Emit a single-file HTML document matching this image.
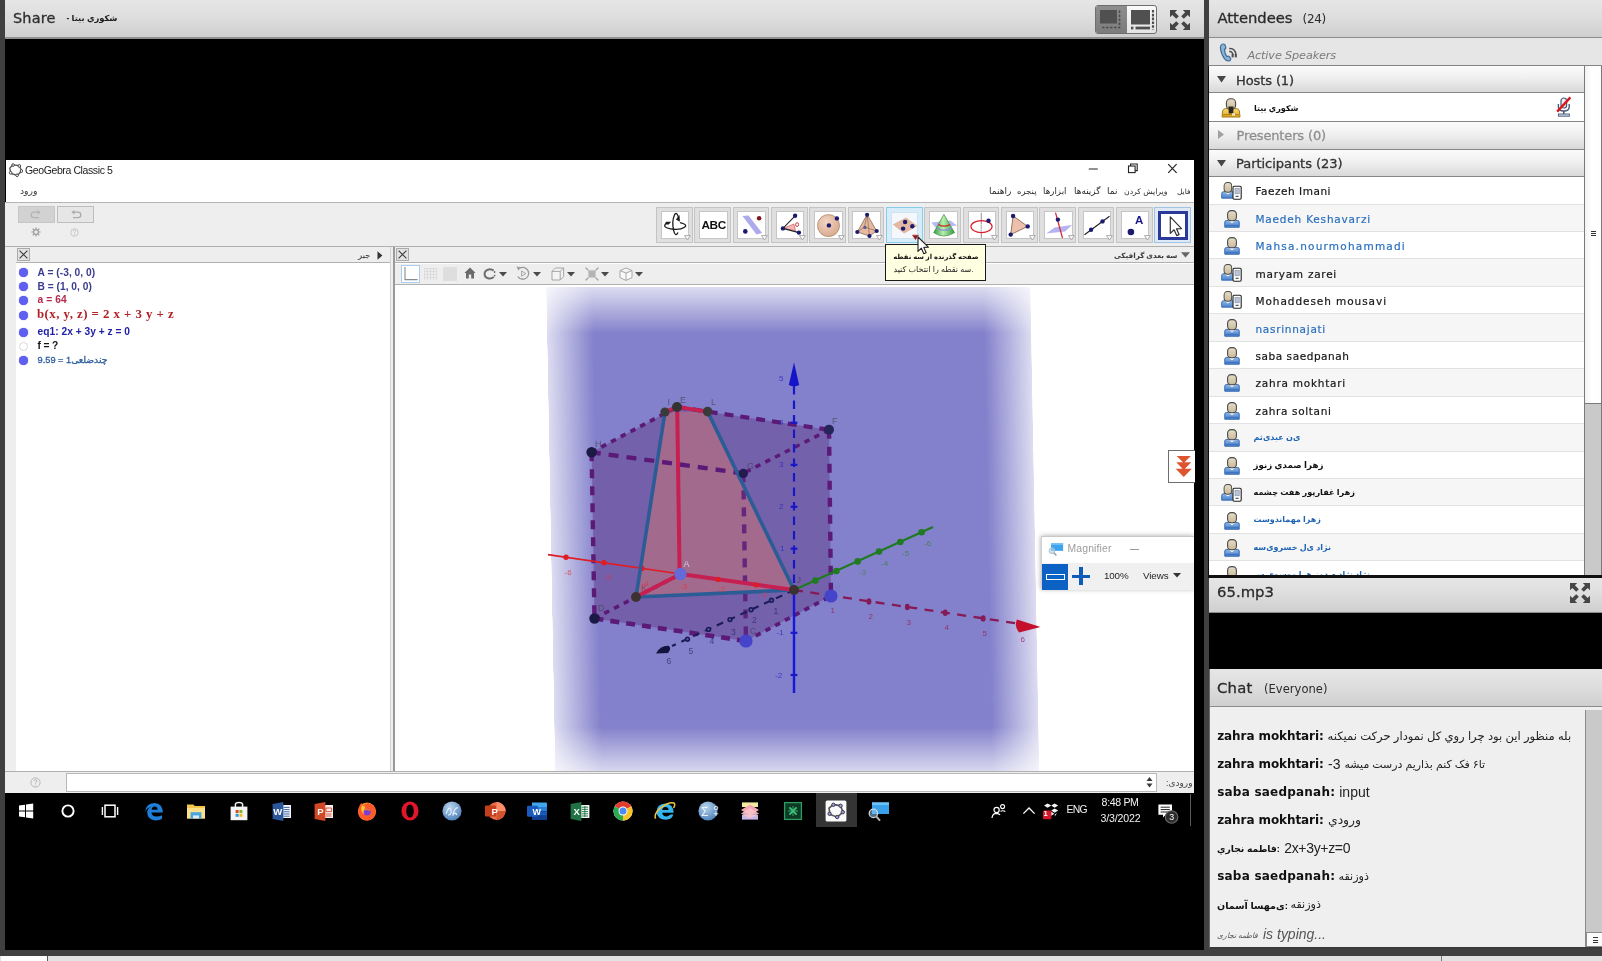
<!DOCTYPE html>
<html lang="fa"><head><meta charset="utf-8"><title>Adobe Connect - Share</title>
<style>
*{box-sizing:border-box}
html,body{margin:0;padding:0}
body{width:1602px;height:961px;position:relative;overflow:hidden;background:#404040;font-family:"Liberation Sans","DejaVu Sans",sans-serif;color:#222}
.a{position:absolute}
.pod{position:absolute;overflow:hidden}
.hdr{position:absolute;left:0;right:0;top:0;background:linear-gradient(#e6e6e6,#dedede 45%,#cfcfcf);border-bottom:1px solid #8c8c8c}
.ui{font-family:"DejaVu Sans","Liberation Sans",sans-serif}
.t{position:absolute;white-space:nowrap;line-height:1;opacity:.999}
</style></head>
<body>
<svg width="0" height="0" style="position:absolute"><defs>
<linearGradient id="gBody" x1="0" y1="0" x2="0" y2="1"><stop offset="0" stop-color="#8db6e8"/><stop offset="1" stop-color="#4a83cc"/></linearGradient>
<linearGradient id="gHost" x1="0" y1="0" x2="0" y2="1"><stop offset="0" stop-color="#f6dd7a"/><stop offset="1" stop-color="#d9a520"/></linearGradient>
<linearGradient id="gHead" x1="0" y1="0" x2="0" y2="1"><stop offset="0" stop-color="#e6dcc6"/><stop offset="1" stop-color="#c9bb9c"/></linearGradient>
<symbol id="person" viewBox="0 0 16 18"><path d="M0.8 17.2 L0.8 12.2 Q0.8 10.6 2.6 10.4 L13.4 10.4 Q15.2 10.6 15.2 12.2 L15.2 17.2 Z" fill="url(#gBody)" stroke="#2f63ad" stroke-width="1"/><path d="M4 10.6 L8 13.2 L12 10.6 Z" fill="#f4f7fb"/><rect x="3.6" y="0.6" width="8.8" height="10.2" rx="3.6" fill="url(#gHead)" stroke="#4a4a4a" stroke-width="1.1"/><path d="M1.6 15.3 H14.4" stroke="#3a6fb8" stroke-width="1"/></symbol>
<symbol id="host" viewBox="0 0 20 20"><path d="M1 19 L1.6 13 Q2 11 4.4 10.6 L15.6 10.6 Q18 11 18.4 13 L19 19 Z" fill="url(#gHost)" stroke="#a77a12" stroke-width="1"/><rect x="5.4" y="0.8" width="9.2" height="10.6" rx="4" fill="url(#gHead)" stroke="#4a4a4a" stroke-width="1.1"/><path d="M7.4 8.6 H12.6 L12.2 15.5 H7.8 Z" fill="#2c2622"/><path d="M2 16.6 H18" stroke="#b8860b" stroke-width="1.2"/><rect x="11" y="15.4" width="3" height="2.2" fill="#f3ead0"/></symbol>
<symbol id="mobile" viewBox="0 0 21 18"><g transform="translate(0,0) scale(0.86,0.94)"><path d="M0.8 17.2 L0.8 12.2 Q0.8 10.6 2.6 10.4 L13.4 10.4 Q15.2 10.6 15.2 12.2 L15.2 17.2 Z" fill="url(#gBody)" stroke="#2f63ad" stroke-width="1"/><path d="M4 10.6 L8 13.2 L12 10.6 Z" fill="#f4f7fb"/><rect x="3.6" y="0.6" width="8.8" height="10.2" rx="3.6" fill="url(#gHead)" stroke="#4a4a4a" stroke-width="1.1"/></g><rect x="12" y="4.2" width="8.2" height="13" rx="1.2" fill="#fff" stroke="#222" stroke-width="1.1"/><rect x="14" y="6.4" width="4.2" height="5.4" fill="#b9c6d8" stroke="#7f8ea3" stroke-width="0.6"/><path d="M14.6 14.3 H17.6" stroke="#333" stroke-width="1"/></symbol>
<symbol id="full" viewBox="0 0 20 20"><g fill="#454545"><path d="M0 0 H7.2 L4.9 2.3 L8.8 6.2 L6.2 8.8 L2.3 4.9 L0 7.2 Z"/><path d="M0 0 H7.2 L4.9 2.3 L8.8 6.2 L6.2 8.8 L2.3 4.9 L0 7.2 Z" transform="translate(20,0) scale(-1,1)"/><path d="M0 0 H7.2 L4.9 2.3 L8.8 6.2 L6.2 8.8 L2.3 4.9 L0 7.2 Z" transform="translate(0,20) scale(1,-1)"/><path d="M0 0 H7.2 L4.9 2.3 L8.8 6.2 L6.2 8.8 L2.3 4.9 L0 7.2 Z" transform="translate(20,20) scale(-1,-1)"/></g></symbol>
</defs></svg>
<div class="pod" id="sharepod" style="left:4.6px;top:0;width:1199.4px;height:950px;background:#000">
<div class="hdr" style="height:39px;border-bottom:2px solid #8f8f8f"></div>
</div>
<div class="t" style='top:10.83px;font-size:14.5px;color:#2e2e2e;left:13.00px;font-family:"DejaVu Sans","Liberation Sans",sans-serif;letter-spacing:0.131px;-webkit-text-stroke:0.3px #2e2e2e;'>Share</div>
<div class="t" style='top:13.98px;font-size:8.3px;color:#1a1a1a;left:66.50px;font-weight:700;direction:rtl;'>شكوري بيتا -</div>
<div class="a" style="left:1095px;top:5px;width:62px;height:29px;border:1px solid #6e6e6e;border-radius:3px;background:linear-gradient(#fafafa,#e4e4e4);overflow:hidden"><div class="a" style="left:0;top:0;width:31px;height:27px;background:linear-gradient(#8e8e8e,#7c7c7c)"></div><svg class="a" style="left:0;top:0" width="60" height="27" viewBox="0 0 60 27"><rect x="4" y="4" width="17" height="13.5" fill="#505050"/><path d="M23.5 4.5 V21.5 H4.5" fill="none" stroke="#4a4a4a" stroke-width="1.6" stroke-dasharray="2.4 1.6"/><rect x="35" y="4" width="19" height="14.5" fill="#505050"/><rect x="39.5" y="20.6" width="14.5" height="2.8" fill="#505050"/><rect x="35" y="20.6" width="2.4" height="2.8" fill="#505050"/><path d="M57 4 V23.5" stroke="#505050" stroke-width="2.2" stroke-dasharray="2.6 1.2"/></svg></div>
<svg class="a" style="left:1170px;top:9.5px" width="20" height="20"><use href="#full"/></svg>
<div class="pod" id="attpod" style="left:1209px;top:0;width:393px;height:575.5px;background:#fff">
<div class="hdr" style="height:38px"></div>
<div class="a" style="left:0;top:38px;width:393px;height:28px;background:#e6e6e6;border-bottom:1.5px solid #858585"></div>
<div class="a" style="left:375px;top:66px;width:18px;height:510px;background:#c9c9c9;border-left:1.5px solid #7a7a7a;border-right:1.5px solid #7a7a7a"></div>
<div class="a" style="left:375px;top:66px;width:18px;height:338px;background:linear-gradient(90deg,#f2f2f2,#ffffff 40%,#fdfdfd);border:1.5px solid #7a7a7a;border-top:none"></div>
<div class="a" style="left:381.5px;top:231px;width:5px;height:6px;background:repeating-linear-gradient(#333 0 1px,transparent 1px 2.2px)"></div>
<div class="a" style="left:0;top:66px;width:375px;height:27px;background:linear-gradient(#fbfbfb,#f0f0f0 45%,#d9d9d9);border-bottom:1.5px solid #868686"><svg class="a" style="left:8px;top:10px" width="9" height="7"><path d="M0 0 H9 L4.5 6.5 Z" fill="#474747"/></svg></div>
<div class="a" style="left:0;top:93px;width:375px;height:29px;background:#fff;border-bottom:1.5px solid #868686"></div>
<div class="a" style="left:0;top:122px;width:375px;height:27.5px;background:linear-gradient(#fbfbfb,#f0f0f0 45%,#d9d9d9);border-bottom:1.5px solid #868686"><svg class="a" style="left:9px;top:8px" width="6" height="9"><path d="M0 0 V9 L6 4.5 Z" fill="#a0a0a0"/></svg></div>
<div class="a" style="left:0;top:149.5px;width:375px;height:27.5px;background:linear-gradient(#fbfbfb,#f0f0f0 45%,#d9d9d9);border-bottom:1.5px solid #868686"><svg class="a" style="left:8px;top:10px" width="9" height="7"><path d="M0 0 H9 L4.5 6.5 Z" fill="#474747"/></svg></div>
<div class="a" style="left:0;top:177.10px;width:375px;height:27.45px;background:#fff;border-bottom:1px solid #e2e2e2"><svg class="a" style="left:11.5px;top:4.5px" width="21" height="18"><use href="#mobile"/></svg></div><div class="a" style="left:0;top:204.55px;width:375px;height:27.45px;background:#f6f6f6;border-bottom:1px solid #e2e2e2"><svg class="a" style="left:15px;top:5px" width="16" height="18"><use href="#person"/></svg></div><div class="a" style="left:0;top:232.00px;width:375px;height:27.45px;background:#fff;border-bottom:1px solid #e2e2e2"><svg class="a" style="left:15px;top:5px" width="16" height="18"><use href="#person"/></svg></div><div class="a" style="left:0;top:259.45px;width:375px;height:27.45px;background:#f6f6f6;border-bottom:1px solid #e2e2e2"><svg class="a" style="left:11.5px;top:4.5px" width="21" height="18"><use href="#mobile"/></svg></div><div class="a" style="left:0;top:286.90px;width:375px;height:27.45px;background:#fff;border-bottom:1px solid #e2e2e2"><svg class="a" style="left:11.5px;top:4.5px" width="21" height="18"><use href="#mobile"/></svg></div><div class="a" style="left:0;top:314.35px;width:375px;height:27.45px;background:#f6f6f6;border-bottom:1px solid #e2e2e2"><svg class="a" style="left:15px;top:5px" width="16" height="18"><use href="#person"/></svg></div><div class="a" style="left:0;top:341.80px;width:375px;height:27.45px;background:#fff;border-bottom:1px solid #e2e2e2"><svg class="a" style="left:15px;top:5px" width="16" height="18"><use href="#person"/></svg></div><div class="a" style="left:0;top:369.25px;width:375px;height:27.45px;background:#f6f6f6;border-bottom:1px solid #e2e2e2"><svg class="a" style="left:15px;top:5px" width="16" height="18"><use href="#person"/></svg></div><div class="a" style="left:0;top:396.70px;width:375px;height:27.45px;background:#fff;border-bottom:1px solid #e2e2e2"><svg class="a" style="left:15px;top:5px" width="16" height="18"><use href="#person"/></svg></div><div class="a" style="left:0;top:424.15px;width:375px;height:27.45px;background:#f6f6f6;border-bottom:1px solid #e2e2e2"><svg class="a" style="left:15px;top:5px" width="16" height="18"><use href="#person"/></svg></div><div class="a" style="left:0;top:451.60px;width:375px;height:27.45px;background:#fff;border-bottom:1px solid #e2e2e2"><svg class="a" style="left:15px;top:5px" width="16" height="18"><use href="#person"/></svg></div><div class="a" style="left:0;top:479.05px;width:375px;height:27.45px;background:#f6f6f6;border-bottom:1px solid #e2e2e2"><svg class="a" style="left:11.5px;top:4.5px" width="21" height="18"><use href="#mobile"/></svg></div><div class="a" style="left:0;top:506.50px;width:375px;height:27.45px;background:#fff;border-bottom:1px solid #e2e2e2"><svg class="a" style="left:15px;top:5px" width="16" height="18"><use href="#person"/></svg></div><div class="a" style="left:0;top:533.95px;width:375px;height:27.45px;background:#f6f6f6;border-bottom:1px solid #e2e2e2"><svg class="a" style="left:15px;top:5px" width="16" height="18"><use href="#person"/></svg></div><div class="a" style="left:0;top:561.40px;width:375px;height:27.45px;background:#fff;border-bottom:1px solid #e2e2e2"><svg class="a" style="left:15px;top:5px" width="16" height="18"><use href="#person"/></svg></div>
</div>
<div class="t" style='top:11.08px;font-size:14.8px;color:#2b2b2b;left:1217.50px;font-family:"DejaVu Sans","Liberation Sans",sans-serif;letter-spacing:-0.03px;-webkit-text-stroke:0.3px #2b2b2b;'>Attendees</div>
<div class="t" style='top:13.45px;font-size:12px;color:#2b2b2b;left:1302.50px;font-family:"DejaVu Sans","Liberation Sans",sans-serif;letter-spacing:-0.285px;'>(24)</div>
<div class="t" style='top:49.52px;font-size:11.2px;color:#7a7a7a;left:1247.50px;font-family:"DejaVu Sans","Liberation Sans",sans-serif;font-style:italic;letter-spacing:-0.106px;'>Active Speakers</div>
<div class="t" style='top:74.20px;font-size:13px;color:#333;left:1236.00px;font-family:"DejaVu Sans","Liberation Sans",sans-serif;letter-spacing:-0.102px;-webkit-text-stroke:0.3px #333;'>Hosts (1)</div>
<div class="t" style='top:129.20px;font-size:13px;color:#8e8e8e;left:1236.50px;font-family:"DejaVu Sans","Liberation Sans",sans-serif;letter-spacing:-0.14px;-webkit-text-stroke:0.3px #8e8e8e;'>Presenters (0)</div>
<div class="t" style='top:157.20px;font-size:13px;color:#333;left:1236.00px;font-family:"DejaVu Sans","Liberation Sans",sans-serif;letter-spacing:-0.04px;-webkit-text-stroke:0.3px #333;'>Participants (23)</div>
<div class="t" style='top:104.69px;font-size:8.05px;color:#111;left:1254.00px;font-weight:700;direction:rtl;'>شكوري بيتا</div>
<div class="t" style='top:186.32px;font-size:10.5px;color:#161616;left:1255.50px;font-family:"DejaVu Sans","Liberation Sans",sans-serif;letter-spacing:0.52px;-webkit-text-stroke:0.2px #161616;'>Faezeh Imani</div>
<div class="t" style='top:213.77px;font-size:10.5px;color:#2a6fbe;left:1255.50px;font-family:"DejaVu Sans","Liberation Sans",sans-serif;letter-spacing:0.802px;-webkit-text-stroke:0.2px #2a6fbe;'>Maedeh Keshavarzi</div>
<div class="t" style='top:241.22px;font-size:10.5px;color:#2a6fbe;left:1255.50px;font-family:"DejaVu Sans","Liberation Sans",sans-serif;letter-spacing:1.211px;-webkit-text-stroke:0.2px #2a6fbe;'>Mahsa.nourmohammadi</div>
<div class="t" style='top:268.67px;font-size:10.5px;color:#161616;left:1255.50px;font-family:"DejaVu Sans","Liberation Sans",sans-serif;letter-spacing:0.741px;-webkit-text-stroke:0.2px #161616;'>maryam zarei</div>
<div class="t" style='top:296.12px;font-size:10.5px;color:#161616;left:1255.50px;font-family:"DejaVu Sans","Liberation Sans",sans-serif;letter-spacing:0.937px;-webkit-text-stroke:0.2px #161616;'>Mohaddeseh mousavi</div>
<div class="t" style='top:323.57px;font-size:10.5px;color:#2a6fbe;left:1255.50px;font-family:"DejaVu Sans","Liberation Sans",sans-serif;letter-spacing:0.714px;-webkit-text-stroke:0.2px #2a6fbe;'>nasrinnajati</div>
<div class="t" style='top:351.02px;font-size:10.5px;color:#161616;left:1255.50px;font-family:"DejaVu Sans","Liberation Sans",sans-serif;letter-spacing:0.556px;-webkit-text-stroke:0.2px #161616;'>saba saedpanah</div>
<div class="t" style='top:378.47px;font-size:10.5px;color:#161616;left:1255.50px;font-family:"DejaVu Sans","Liberation Sans",sans-serif;letter-spacing:0.759px;-webkit-text-stroke:0.2px #161616;'>zahra mokhtari</div>
<div class="t" style='top:405.92px;font-size:10.5px;color:#161616;left:1255.50px;font-family:"DejaVu Sans","Liberation Sans",sans-serif;letter-spacing:0.644px;-webkit-text-stroke:0.2px #161616;'>zahra soltani</div>
<div class="t" style='top:433.89px;font-size:8.11px;color:#1e63b4;left:1253.50px;font-weight:700;direction:rtl;'>ى‌ن عبدى‌ثم</div>
<div class="t" style='top:460.87px;font-size:8.67px;color:#111;left:1253.50px;font-weight:700;direction:rtl;'>زهرا صمدي زنوز</div>
<div class="t" style='top:488.77px;font-size:8.13px;color:#111;left:1253.50px;font-weight:700;direction:rtl;'>زهرا غفارپور هفت چشمه</div>
<div class="t" style='top:516.35px;font-size:7.98px;color:#1e63b4;left:1253.50px;font-weight:700;direction:rtl;'>زهرا مهماندوست</div>
<div class="t" style='top:543.78px;font-size:8.0px;color:#1e63b4;left:1253.50px;font-weight:700;direction:rtl;'>نژاد ى‌ل خسروى‌سه</div>
<div class="t" style='top:571.28px;font-size:7.94px;color:#1e63b4;left:1253.50px;font-weight:700;direction:rtl;'>نژاد نژاد م دمز هرا موسوى س</div>
<svg class="a" style="left:1219px;top:43px" width="21" height="21" viewBox="0 0 21 21"><path d="M3.2 1.2 Q1.2 2 1.4 5 Q2.2 11.5 5.6 15.8 Q7.8 18.6 10.8 17.6 Q12 17 11.6 15.6 L10.2 13.4 Q9 12.6 7.8 13.6 Q5.8 11 5.4 6.4 Q7 6 6.8 4.6 L6 1.8 Q5 0.6 3.2 1.2 Z" fill="#8fb4d6" stroke="#3f6c98" stroke-width="1.2"/><path d="M10.2 8.6 Q13.6 8.2 14 12.2" fill="none" stroke="#4d4d4d" stroke-width="1.5"/><path d="M10.2 5.6 Q16.6 5 17 12.2" fill="none" stroke="#4d4d4d" stroke-width="1.5"/><rect x="12.6" y="11" width="2" height="3.4" fill="#4d4d4d"/><rect x="15.8" y="11" width="2" height="3.4" fill="#4d4d4d"/></svg>
<svg class="a" style="left:1221px;top:97.5px" width="20" height="20"><use href="#host"/></svg>
<svg class="a" style="left:1556px;top:96px" width="16" height="22" viewBox="0 0 16 22"><rect x="5" y="2" width="5.6" height="10" rx="2.8" fill="#e8eef6" stroke="#4a5a78" stroke-width="1.2"/><path d="M2.4 8 V11 Q2.4 15 7.8 15 Q13.2 15 13.2 11 V8" fill="none" stroke="#4a5a78" stroke-width="1.4"/><path d="M7.8 15 V18.4" stroke="#4a5a78" stroke-width="1.6"/><rect x="2.4" y="18" width="11" height="2.2" fill="#c9d6ea" stroke="#4a5a78" stroke-width="0.9"/><path d="M14.4 1.4 L1.2 15.6" stroke="#d8181e" stroke-width="2.4"/></svg>
<div class="a" style="left:1208px;top:66px;width:1px;height:511px;background:#0c0c0c"></div><div class="a" style="left:1208px;top:575.3px;width:394px;height:2.6px;background:#101010"></div>
<div class="pod" id="mp3pod" style="left:1209px;top:577.5px;width:393px;height:91.5px;background:#000"><div class="hdr" style="height:35px"></div></div>
<div class="t" style='top:584.68px;font-size:14.8px;color:#2b2b2b;left:1217.00px;font-family:"DejaVu Sans","Liberation Sans",sans-serif;letter-spacing:0.039px;-webkit-text-stroke:0.3px #2b2b2b;'>65.mp3</div>
<svg class="a" style="left:1570px;top:583px" width="20" height="20"><use href="#full"/></svg>
<div class="pod" id="chatpod" style="left:1209px;top:669px;width:393px;height:280px;background:#efefef;border-left:1px solid #6a6a6a;border-bottom:2px solid #3a3a3a"><div class="hdr" style="height:38px"></div><div class="a" style="left:375px;top:41px;width:18px;height:237px;background:#c9c9c9;border-left:1.5px solid #8a8a8a"></div><div class="a" style="left:376px;top:263px;width:17px;height:15px;background:#fafafa;border:1px solid #8a8a8a"><div class="a" style="left:6px;top:3.5px;width:5px;height:7px;background:repeating-linear-gradient(#333 0 1.1px,transparent 1.1px 2.6px)"></div></div></div>
<div class="t" style='top:681.08px;font-size:14.8px;color:#2b2b2b;left:1217.00px;font-family:"DejaVu Sans","Liberation Sans",sans-serif;letter-spacing:0.227px;-webkit-text-stroke:0.3px #2b2b2b;'>Chat</div>
<div class="t" style='top:683.87px;font-size:11.5px;color:#2b2b2b;left:1264.00px;font-family:"DejaVu Sans","Liberation Sans",sans-serif;letter-spacing:0.044px;'>(Everyone)</div>
<div class="t" style='top:730.45px;font-size:12px;color:#111;left:1217.20px;font-family:"DejaVu Sans","Liberation Sans",sans-serif;font-weight:700;letter-spacing:-0.084px;'>zahra mokhtari:</div>
<div class="t" style='top:730.79px;font-size:11.59px;color:#222;left:1327.50px;'>بله منظور اين بود چرا روي كل نمودار حركت نميكنه</div>
<div class="t" style='top:758.45px;font-size:12px;color:#111;left:1217.20px;font-family:"DejaVu Sans","Liberation Sans",sans-serif;font-weight:700;letter-spacing:-0.084px;'>zahra mokhtari:</div>
<div class="t" style='top:759.34px;font-size:10.94px;color:#222;left:1344.50px;'>تا۶ فک کنم بذاریم درست میشه</div>
<div class="t" style='top:756.76px;font-size:14px;color:#222;left:1328.00px;letter-spacing:0.073px;'>-3</div>
<div class="t" style='top:786.45px;font-size:12px;color:#111;left:1217.20px;font-family:"DejaVu Sans","Liberation Sans",sans-serif;font-weight:700;letter-spacing:0.217px;'>saba saedpanah:</div>
<div class="t" style='top:784.76px;font-size:14px;color:#222;left:1339.20px;letter-spacing:0.048px;'>input</div>
<div class="t" style='top:814.45px;font-size:12px;color:#111;left:1217.20px;font-family:"DejaVu Sans","Liberation Sans",sans-serif;font-weight:700;letter-spacing:-0.084px;'>zahra mokhtari:</div>
<div class="t" style='top:814.18px;font-size:12.32px;color:#222;left:1328.00px;'>ورودي</div>
<div class="t" style='top:844.79px;font-size:9.23px;color:#111;left:1217.00px;font-weight:700;'>فاطمه نجاري:</div>
<div class="t" style='top:840.76px;font-size:14px;color:#222;left:1284.20px;letter-spacing:-0.321px;'>2x+3y+z=0</div>
<div class="t" style='top:870.45px;font-size:12px;color:#111;left:1217.20px;font-family:"DejaVu Sans","Liberation Sans",sans-serif;font-weight:700;letter-spacing:0.217px;'>saba saedpanah:</div>
<div class="t" style='top:871.16px;font-size:11.16px;color:#222;left:1338.50px;'>ذوزنقه</div>
<div class="t" style='top:900.51px;font-size:9.56px;color:#111;left:1217.00px;font-weight:700;'>ى‌مهسا آسمان:</div>
<div class="t" style='top:899.16px;font-size:11.16px;color:#222;left:1290.50px;'>ذوزنقه</div>
<div class="t" style='top:932.09px;font-size:7.58px;color:#555;left:1217.00px;font-style:italic;'>فاطمه نجارى</div>
<div class="t" style='top:926.66px;font-size:14px;color:#555;left:1263.00px;font-style:italic;letter-spacing:-0.003px;'>is typing...</div>
<div class="a" style="left:0;top:956px;width:1602px;height:5px;background:#e2e2e2"></div><div class="a" style="left:1px;top:956px;width:47px;height:5px;background:#fdfdfd;border-right:1px solid #555"></div><div class="a" style="left:1441px;top:956px;width:1px;height:5px;background:#777"></div>
<div class="pod" id="ggb" style="left:5px;top:160px;width:1189px;height:633px;background:#fff"><div class="a" style="left:0;top:0;width:0.5px;height:633px;background:#000"></div><svg class="a" style="left:2.6px;top:333.5px" width="6" height="11"><path d="M5.2 0.8 V10 L0.8 5.2 Z" fill="none" stroke="#555" stroke-width="0.8"/></svg>
<div class="a" style="left:0;top:42px;width:1189px;height:45px;background:#eeeeee;border-top:1.5px solid #b4b4b4;border-bottom:1.5px solid #b0b0b0"></div>
<div class="a" style="left:0;top:87px;width:10.5px;height:546px;background:#eeeeee"></div>
<div class="a" style="left:10.5px;top:87px;width:1178.5px;height:16px;background:#eeeeee;border-bottom:1.5px solid #b0b0b0"></div>
<div class="a" style="left:385px;top:87px;width:4.5px;height:524px;background:#eeeeee;border-right:2px solid #9a9a9a;border-left:1px solid #d4d4d4"></div>
<div class="a" style="left:389.5px;top:103.5px;width:799.5px;height:21.5px;background:#eeeeee;border-bottom:1.5px solid #b0b0b0"></div>
<div class="a" style="left:0;top:610.5px;width:1189px;height:22.5px;background:#eeeeee;border-top:1.5px solid #b0b0b0"></div>
<div class="a" style="left:61px;top:613px;width:1090.5px;height:18.5px;background:#fff;border:1px solid #b8b8b8"></div>
<svg class="a" style="left:1140.5px;top:616.5px" width="7" height="11"><path d="M0.5 4 L3.5 0 L6.5 4 Z M0.5 6.5 L3.5 10.5 L6.5 6.5 Z" fill="#3a3a3a"/></svg>
<svg class="a" style="left:24.5px;top:616.5px" width="11" height="11"><circle cx="5.5" cy="5.5" r="4.6" fill="none" stroke="#b5b5b5" stroke-width="1"/><path d="M4 4.2 Q4 2.8 5.5 2.8 Q7 2.8 7 4.1 Q7 5 5.6 5.6 V6.6" fill="none" stroke="#b5b5b5" stroke-width="1"/><circle cx="5.6" cy="8" r="0.6" fill="#b5b5b5"/></svg>
<div class="a" style="left:12.5px;top:46px;width:37.5px;height:16.5px;background:#d2d2d2;border:1px solid #c6c6c6"></div>
<div class="a" style="left:51.5px;top:46px;width:37.5px;height:16.5px;background:#e6e6e6;border:1px solid #bdbdbd"></div>
<svg class="a" style="left:25px;top:49.5px" width="12" height="9" viewBox="0 0 12 9"><path d="M8.5 2.2 H4 Q1.2 2.2 1.2 5 Q1.2 7.6 4 7.6 H9" fill="none" stroke="#b4b4b4" stroke-width="1.3"/><path d="M7.6 0 L10.6 2.2 L7.6 4.4 Z" fill="#b4b4b4"/></svg>
<svg class="a" style="left:64.5px;top:49.5px" width="12" height="9" viewBox="0 0 12 9"><path d="M3.5 2.2 H8 Q10.8 2.2 10.8 5 Q10.8 7.6 8 7.6 H3" fill="none" stroke="#a9a9a9" stroke-width="1.3"/><path d="M4.4 0 L1.4 2.2 L4.4 4.4 Z" fill="#a9a9a9"/></svg>
<svg class="a" style="left:25.5px;top:67px" width="10" height="10" viewBox="0 0 10 10"><circle cx="5" cy="5" r="2.4" fill="none" stroke="#9a9a9a" stroke-width="1.2"/><path d="M5 0.4V2 M5 8V9.6 M0.4 5H2 M8 5H9.6 M1.7 1.7L2.9 2.9 M7.1 7.1L8.3 8.3 M1.7 8.3L2.9 7.1 M7.1 2.9L8.3 1.7" stroke="#9a9a9a" stroke-width="1.2"/></svg>
<svg class="a" style="left:65px;top:67.5px" width="9" height="9" viewBox="0 0 11 11"><circle cx="5.5" cy="5.5" r="4.6" fill="none" stroke="#c2c2c2" stroke-width="1.1"/><path d="M4 4.2 Q4 2.8 5.5 2.8 Q7 2.8 7 4.1 Q7 5 5.6 5.6 V6.6" fill="none" stroke="#c2c2c2" stroke-width="1.1"/><circle cx="5.6" cy="8" r="0.7" fill="#c2c2c2"/></svg>
<svg class="a" style="left:12px;top:88.2px" width="13" height="13" viewBox="0 0 13 13"><rect x="0.5" y="0.5" width="12" height="12" fill="#e2e2e2" stroke="#aaaaaa"/><path d="M2.6 2.6 L10.4 10.4 M10.4 2.6 L2.6 10.4" stroke="#3c3c3c" stroke-width="1.1"/></svg>
<svg class="a" style="left:391.3px;top:88.2px" width="13" height="13" viewBox="0 0 13 13"><rect x="0.5" y="0.5" width="12" height="12" fill="#e2e2e2" stroke="#aaaaaa"/><path d="M2.6 2.6 L10.4 10.4 M10.4 2.6 L2.6 10.4" stroke="#3c3c3c" stroke-width="1.1"/></svg>
<svg class="a" style="left:372px;top:90.5px" width="6" height="9"><path d="M0.5 0.3 V8.7 L5.4 4.5 Z" fill="#333"/></svg>
<svg class="a" style="left:1175.5px;top:92px" width="9" height="6"><path d="M0 0.2 H9 L4.5 5.6 Z" fill="#666"/></svg>
<div class="a" style="left:13.8px;top:108.2px;width:9px;height:9px;border-radius:50%;background:#5f5ff0;box-shadow:0 0 1px #4a4adc"></div>
<div class="a" style="left:13.8px;top:122.2px;width:9px;height:9px;border-radius:50%;background:#5f5ff0;box-shadow:0 0 1px #4a4adc"></div>
<div class="a" style="left:13.8px;top:136.0px;width:9px;height:9px;border-radius:50%;background:#5f5ff0;box-shadow:0 0 1px #4a4adc"></div>
<div class="a" style="left:13.8px;top:151.2px;width:9px;height:9px;border-radius:50%;background:#5f5ff0;box-shadow:0 0 1px #4a4adc"></div>
<div class="a" style="left:13.8px;top:168.1px;width:9px;height:9px;border-radius:50%;background:#5f5ff0;box-shadow:0 0 1px #4a4adc"></div>
<div class="a" style="left:13.8px;top:182.1px;width:9px;height:9px;border-radius:50%;background:#fff;border:1px solid #d8d8d8"></div>
<div class="a" style="left:13.8px;top:196.1px;width:9px;height:9px;border-radius:50%;background:#5f5ff0;box-shadow:0 0 1px #4a4adc"></div>
<svg class="a" style="left:2.5px;top:2.5px" width="15.5" height="14.5" viewBox="0 0 14 13"><path d="M4.6 1.6 L10 2.4 L12.4 7 L8.4 11.2 L2.6 9.4 L1.6 4.6 Z" fill="none" stroke="#555" stroke-width="1.2"/><g fill="#fff" stroke="#444" stroke-width="0.9"><circle cx="4.6" cy="1.8" r="1.2"/><circle cx="10.2" cy="2.6" r="1.2"/><circle cx="12.2" cy="7.2" r="1.2"/><circle cx="8.2" cy="11" r="1.2"/><circle cx="2.4" cy="8.8" r="1.2"/></g></svg>
<svg class="a" style="left:1075px;top:0" width="114" height="20" viewBox="0 0 114 20"><path d="M8.8 9 H17.8" stroke="#222" stroke-width="1"/><rect x="48.5" y="6" width="6.6" height="6.6" fill="#fff" stroke="#222" stroke-width="1.1"/><path d="M50.6 6 V4 H57.2 V10.6 H55.2" fill="none" stroke="#222" stroke-width="1.1"/><path d="M88.2 4.2 L96.6 12.8 M96.6 4.2 L88.2 12.8" stroke="#222" stroke-width="1.2"/></svg>
</div>
<div class="t" style='top:165.02px;font-size:10.5px;color:#222;left:25.00px;letter-spacing:-0.391px;'>GeoGebra Classic 5</div>
<div class="t" style='top:187.18px;font-size:9.24px;color:#333;left:20.00px;'>ورود</div>
<div class="t" style='top:188.32px;font-size:7.42px;color:#2a2a2a;left:1177.00px;'>فایل</div>
<div class="t" style='top:188.06px;font-size:7.73px;color:#2a2a2a;left:1124.00px;'>ویرایش کردن</div>
<div class="t" style='top:186.95px;font-size:9.04px;color:#2a2a2a;left:1107.00px;'>نما</div>
<div class="t" style='top:187.07px;font-size:8.9px;color:#2a2a2a;left:1074.00px;'>گزینه‌ها</div>
<div class="t" style='top:187.24px;font-size:8.7px;color:#2a2a2a;left:1043.00px;'>ابزارها</div>
<div class="t" style='top:187.43px;font-size:8.47px;color:#2a2a2a;left:1017.00px;'>پنجره</div>
<div class="t" style='top:186.90px;font-size:9.1px;color:#2a2a2a;left:989.00px;'>راهنما</div>
<div class="t" style='top:251.32px;font-size:8.49px;color:#333;left:358.00px;'>جبر</div>
<div class="t" style='top:252.48px;font-size:7.23px;color:#3a3a3a;left:1114.00px;font-weight:700;'>سه بعدی گرافیکی</div>
<div class="t" style='top:779.41px;font-size:8.97px;color:#444;left:1166.00px;direction:rtl;'>ورودی:</div>
<div class="t" style='top:267.77px;font-size:10.2px;color:#3b3b8e;left:37.60px;font-weight:700;letter-spacing:0.036px;'>A = (-3, 0, 0)</div>
<div class="t" style='top:281.67px;font-size:10.2px;color:#3b3b8e;left:37.60px;font-weight:700;letter-spacing:0.009px;'>B = (1, 0, 0)</div>
<div class="t" style='top:295.27px;font-size:10.2px;color:#b42a4c;left:37.60px;font-weight:700;letter-spacing:0.098px;'>a = 64</div>
<div class="t" style='top:308.47px;font-size:12.8px;color:#b02226;left:37.00px;font-family:"Liberation Serif","DejaVu Serif",serif;font-weight:700;letter-spacing:0.466px;'>b(x, y, z)  =  2 x + 3 y + z</div>
<div class="t" style='top:327.27px;font-size:10.2px;color:#2020a8;left:37.60px;font-weight:700;letter-spacing:0.018px;'>eq1: 2x + 3y + z = 0</div>
<div class="t" style='top:341.27px;font-size:10.2px;color:#151515;left:37.60px;font-weight:700;letter-spacing:-0.127px;'>f = ?</div>
<div class="t" style='top:356.01px;font-size:9.21px;color:#2c5c9c;left:37.60px;direction:rtl;-webkit-text-stroke:0.3px #2c5c9c;'>چندضلعی1 = 9.59</div>
<svg width="0" height="0" style="position:absolute"><defs><radialGradient id="gSph" cx="0.4" cy="0.35" r="0.7"><stop offset="0" stop-color="#f3d6c4"/><stop offset="1" stop-color="#d8a88c"/></radialGradient><linearGradient id="gCone" x1="0" y1="0" x2="1" y2="0"><stop offset="0" stop-color="#2f9a3a"/><stop offset="0.45" stop-color="#b8f0b0"/><stop offset="1" stop-color="#2f9a3a"/></linearGradient></defs></svg>
<div class="a" id="toolbar" style="left:0;top:0">
<div class="a" style="left:656.00px;top:207px;width:36.5px;height:36px;background:#dfdfdf;border:1px solid #c4c4c4"><div class="a" style="left:3.8px;top:3.3px;width:28.4px;height:28.2px;background:#fff;border:1px solid #c6c6c6"></div><svg class="a" style="left:4.2px;top:3.6px;overflow:visible" width="28" height="28" viewBox="0 0 27 28"><g fill="none" stroke="#1c1c1c" stroke-width="1.3"><path d="M4.2 12.2 A10.5 3.5 0 1 0 18.4 10.6"/><path d="M16.4 20.6 A3.1 10.6 0 1 1 17.2 6.4"/></g><path d="M3 12.6 L4.6 9.8 L9.6 9.8 L7.2 12.6 Z M18 3 L18.4 9.8 L14.4 7.6 Z" fill="#1c1c1c"/><path d="M23 23.6 H28.8 L25.9 28 Z" fill="#fff" stroke="#a0a0a0" stroke-width="0.9"/></svg></div>
<div class="a" style="left:694.34px;top:207px;width:36.5px;height:36px;background:#dfdfdf;border:1px solid #c4c4c4"><div class="a" style="left:3.8px;top:3.3px;width:28.4px;height:28.2px;background:#fff;border:1px solid #c6c6c6"></div></div>
<div class="a" style="left:732.68px;top:207px;width:36.5px;height:36px;background:#dfdfdf;border:1px solid #c4c4c4"><div class="a" style="left:3.8px;top:3.3px;width:28.4px;height:28.2px;background:#fff;border:1px solid #c6c6c6"></div><svg class="a" style="left:4.2px;top:3.6px;overflow:visible" width="28" height="28" viewBox="0 0 27 28"><path d="M4 4 L10 3.4 L23.6 21 L18 22.4 Z" fill="#9d9bea" opacity="0.85"/><circle cx="6.8" cy="19.4" r="2.3" fill="#1a1a6e"/><circle cx="20.6" cy="6.2" r="2.3" fill="#7a1a22"/><path d="M23 23.6 H28.8 L25.9 28 Z" fill="#fff" stroke="#a0a0a0" stroke-width="0.9"/></svg></div>
<div class="a" style="left:771.02px;top:207px;width:36.5px;height:36px;background:#dfdfdf;border:1px solid #c4c4c4"><div class="a" style="left:3.8px;top:3.3px;width:28.4px;height:28.2px;background:#fff;border:1px solid #c6c6c6"></div><svg class="a" style="left:4.2px;top:3.6px;overflow:visible" width="28" height="28" viewBox="0 0 27 28"><path d="M6.4 16.4 L17.4 12 L19 18.6 Z" fill="#f4b6b6" stroke="#c44" stroke-width="0.6"/><path d="M18.6 3.8 L6.4 16.4 L22.4 20.6" fill="none" stroke="#222" stroke-width="1.1"/><circle cx="18.6" cy="3.8" r="2.2" fill="#1a1a6e"/><circle cx="6.4" cy="16.4" r="2.2" fill="#1a1a6e"/><circle cx="22.4" cy="20.6" r="2.2" fill="#1a1a6e"/><ellipse cx="20.6" cy="12.6" rx="1.5" ry="1.9" fill="none" stroke="#c03030" stroke-width="0.9"/><path d="M23 23.6 H28.8 L25.9 28 Z" fill="#fff" stroke="#a0a0a0" stroke-width="0.9"/></svg></div>
<div class="a" style="left:809.36px;top:207px;width:36.5px;height:36px;background:#dfdfdf;border:1px solid #c4c4c4"><div class="a" style="left:3.8px;top:3.3px;width:28.4px;height:28.2px;background:#fff;border:1px solid #c6c6c6"></div><svg class="a" style="left:4.2px;top:3.6px;overflow:visible" width="28" height="28" viewBox="0 0 27 28"><circle cx="13" cy="13.6" r="11" fill="url(#gSph)" stroke="#b08868" stroke-width="0.8"/><circle cx="13.4" cy="13.4" r="2.2" fill="#1a1a6e"/><circle cx="21.4" cy="6.4" r="2.2" fill="#1a1a6e"/><path d="M23 23.6 H28.8 L25.9 28 Z" fill="#fff" stroke="#a0a0a0" stroke-width="0.9"/></svg></div>
<div class="a" style="left:847.70px;top:207px;width:36.5px;height:36px;background:#dfdfdf;border:1px solid #c4c4c4"><div class="a" style="left:3.8px;top:3.3px;width:28.4px;height:28.2px;background:#fff;border:1px solid #c6c6c6"></div><svg class="a" style="left:4.2px;top:3.6px;overflow:visible" width="28" height="28" viewBox="0 0 27 28"><path d="M13.6 2.6 L3.8 20 L16 24 L23.2 19 Z" fill="#e6b9a0" stroke="#8a6a58" stroke-width="0.8"/><path d="M13.6 2.6 L16 24 M13.6 2.6 L11 15 L3.8 20 M11 15 L23.2 19" fill="none" stroke="#8a6a58" stroke-width="0.7"/><circle cx="13.6" cy="2.8" r="2.1" fill="#1a1a6e"/><circle cx="3.8" cy="20" r="2.1" fill="#1a1a6e"/><circle cx="16" cy="24" r="2.1" fill="#1a1a6e"/><circle cx="23.2" cy="19" r="2.1" fill="#1a1a6e"/><circle cx="11.4" cy="15.4" r="1.7" fill="#5a5a8e"/><path d="M23 23.6 H28.8 L25.9 28 Z" fill="#fff" stroke="#a0a0a0" stroke-width="0.9"/></svg></div>
<div class="a" style="left:886.04px;top:207px;width:36.5px;height:36px;background:#d6ecf8;border:1.5px solid #86cdea"><div class="a" style="left:3.5px;top:3.5px;width:27px;height:27px;background:#f4f8fc;border:1px solid #cfe2f0"></div><svg class="a" style="left:4.2px;top:3.6px;overflow:visible" width="28" height="28" viewBox="0 0 27 28"><path d="M1.2 12.6 L14.6 5.4 L26 14 L12.6 21.6 Z" fill="#e0b49e" opacity="0.95"/><circle cx="13.6" cy="10" r="2.2" fill="#1a1a6e"/><circle cx="11.6" cy="16.6" r="2.2" fill="#1a1a6e"/><circle cx="20.8" cy="14.2" r="2.2" fill="#1a1a6e"/><path d="M21 23.2 H27 L24 27.6 Z" fill="#7a1a1a" stroke="#c04040" stroke-width="0.8"/></svg></div>
<div class="a" style="left:924.38px;top:207px;width:36.5px;height:36px;background:#dfdfdf;border:1px solid #c4c4c4"><div class="a" style="left:3.8px;top:3.3px;width:28.4px;height:28.2px;background:#fff;border:1px solid #c6c6c6"></div><svg class="a" style="left:4.2px;top:3.6px;overflow:visible" width="28" height="28" viewBox="0 0 27 28"><path d="M0.8 10.6 L20 8.6 L26.4 13.4 L6 16.6 Z" fill="#a9a6ee" opacity="0.8"/><path d="M13.4 2.4 L3.2 20.6 Q13 27.4 24 20.6 Z" fill="url(#gCone)" stroke="#3a8a3a" stroke-width="0.7"/><path d="M8 12.4 Q13.4 16 19.4 12.4" fill="none" stroke="#c22" stroke-width="1.2"/><path d="M6 16.2 Q13.6 20.4 21.6 16" fill="none" stroke="#8a86e0" stroke-width="1.6" opacity="0.8"/></svg></div>
<div class="a" style="left:962.72px;top:207px;width:36.5px;height:36px;background:#dfdfdf;border:1px solid #c4c4c4"><div class="a" style="left:3.8px;top:3.3px;width:28.4px;height:28.2px;background:#fff;border:1px solid #c6c6c6"></div><svg class="a" style="left:4.2px;top:3.6px;overflow:visible" width="28" height="28" viewBox="0 0 27 28"><path d="M12.8 0.8 V26" stroke="#9a9a9a" stroke-width="1.1"/><ellipse cx="13" cy="14.6" rx="10.6" ry="6" fill="none" stroke="#d8202c" stroke-width="1.2"/><path d="M12.8 12 V20" stroke="#eee" stroke-width="1.1" stroke-dasharray="1.2 1.2"/><circle cx="20" cy="8.8" r="2.2" fill="#1a1a6e"/><path d="M23 23.6 H28.8 L25.9 28 Z" fill="#fff" stroke="#a0a0a0" stroke-width="0.9"/></svg></div>
<div class="a" style="left:1001.06px;top:207px;width:36.5px;height:36px;background:#dfdfdf;border:1px solid #c4c4c4"><div class="a" style="left:3.8px;top:3.3px;width:28.4px;height:28.2px;background:#fff;border:1px solid #c6c6c6"></div><svg class="a" style="left:4.2px;top:3.6px;overflow:visible" width="28" height="28" viewBox="0 0 27 28"><path d="M6.6 4 L21.2 14.4 L4.2 22.6 Z" fill="#ecc0ac" stroke="#8a6a58" stroke-width="0.9"/><circle cx="6.6" cy="4" r="2.2" fill="#1a1a6e"/><circle cx="21.2" cy="14.4" r="2.2" fill="#1a1a6e"/><circle cx="4.2" cy="22.6" r="2.2" fill="#1a1a6e"/><path d="M23 23.6 H28.8 L25.9 28 Z" fill="#fff" stroke="#a0a0a0" stroke-width="0.9"/></svg></div>
<div class="a" style="left:1039.40px;top:207px;width:36.5px;height:36px;background:#dfdfdf;border:1px solid #c4c4c4"><div class="a" style="left:3.8px;top:3.3px;width:28.4px;height:28.2px;background:#fff;border:1px solid #c6c6c6"></div><svg class="a" style="left:4.2px;top:3.6px;overflow:visible" width="28" height="28" viewBox="0 0 27 28"><path d="M0.8 21.4 L9 15.4 L26.6 13 L19.6 19.6 Z" fill="#a9a6ee" opacity="0.85"/><path d="M10 0.6 L17 26" stroke="#d8202c" stroke-width="1.2"/><circle cx="12.4" cy="7.6" r="2.2" fill="#1a1a6e"/><path d="M23 23.6 H28.8 L25.9 28 Z" fill="#fff" stroke="#a0a0a0" stroke-width="0.9"/></svg></div>
<div class="a" style="left:1077.74px;top:207px;width:36.5px;height:36px;background:#dfdfdf;border:1px solid #c4c4c4"><div class="a" style="left:3.8px;top:3.3px;width:28.4px;height:28.2px;background:#fff;border:1px solid #c6c6c6"></div><svg class="a" style="left:4.2px;top:3.6px;overflow:visible" width="28" height="28" viewBox="0 0 27 28"><path d="M1 22.8 L26 4.2" stroke="#222" stroke-width="1.2"/><circle cx="7.6" cy="17.8" r="2.2" fill="#1a1a6e"/><circle cx="19" cy="9.4" r="2.2" fill="#1a1a6e"/><path d="M23 23.6 H28.8 L25.9 28 Z" fill="#fff" stroke="#a0a0a0" stroke-width="0.9"/></svg></div>
<div class="a" style="left:1116.08px;top:207px;width:36.5px;height:36px;background:#dfdfdf;border:1px solid #c4c4c4"><div class="a" style="left:3.8px;top:3.3px;width:28.4px;height:28.2px;background:#fff;border:1px solid #c6c6c6"></div><svg class="a" style="left:4.2px;top:3.6px;overflow:visible" width="28" height="28" viewBox="0 0 27 28"><circle cx="9.4" cy="20" r="3.3" fill="#1a1a6e"/><path d="M23 23.6 H28.8 L25.9 28 Z" fill="#fff" stroke="#a0a0a0" stroke-width="0.9"/></svg></div>
<div class="a" style="left:1154.42px;top:207px;width:36.5px;height:36px;background:#dfe9f6;border:1px solid #9ec4e6"><div class="a" style="left:2.5px;top:2.5px;width:30px;height:29.5px;background:#fff;border:3px solid #2b3a9a"></div><svg class="a" style="left:4.2px;top:3.6px;overflow:visible" width="28" height="28" viewBox="0 0 27 28"><path d="M9.8 4.8 V21.4 L13.6 17.8 L16.2 23.6 L18.6 22.6 L16 16.8 L21 16.6 Z" fill="#fff" stroke="#333" stroke-width="1.2" stroke-linejoin="round"/></svg></div>
</div>
<div class="t" style='top:219.72px;font-size:11.8px;color:#111;left:701.50px;font-weight:700;letter-spacing:-0.454px;'>ABC</div>
<div class="t" style='top:214.87px;font-size:11.5px;color:#1a1a8a;left:1135.00px;font-weight:700;letter-spacing:1.188px;'>A</div>
<div class="a" id="stylebar" style="left:0;top:0"><div class="a" style="left:401px;top:264.5px;width:19px;height:18px;background:#fff;border:1.5px solid #a8cdee"></div><svg class="a" style="left:404px;top:267px" width="14" height="14"><path d="M1 0 V12.6 H13.6" fill="none" stroke="#8a8a8a" stroke-width="1.1"/></svg><div class="a" style="left:424px;top:267.5px;width:12.5px;height:12.5px;background:repeating-linear-gradient(90deg,#dcdcdc 0 1px,transparent 1px 3px),repeating-linear-gradient(#dcdcdc 0 1px,transparent 1px 3px)"></div><div class="a" style="left:443px;top:267px;width:14px;height:13.5px;background:#dedede"></div><svg class="a" style="left:463.5px;top:267px" width="12" height="12" viewBox="0 0 12 12"><path d="M6 0.4 L0.4 6 H2 V11.4 H4.8 V7.6 H7.2 V11.4 H10 V6 H11.6 Z" fill="#6a6a6a"/></svg><svg class="a" style="left:482.5px;top:267.5px" width="13" height="12" viewBox="0 0 13 12"><path d="M10.6 2.6 Q8.6 1 5.8 1.4 Q1.6 2.2 1.6 6 Q1.6 9.8 5.8 10.4 Q8.6 10.8 10.8 9" fill="none" stroke="#6e6e6e" stroke-width="2"/><circle cx="11.6" cy="4" r="0.9" fill="#6e6e6e"/><circle cx="11.6" cy="7.6" r="0.9" fill="#6e6e6e"/></svg><svg class="a" style="left:499px;top:271.5px" width="8" height="5"><path d="M0 0 H8 L4 4.6 Z" fill="#4a4a4a"/></svg><svg class="a" style="left:515.5px;top:266px" width="14" height="15" viewBox="0 0 14 15"><path d="M3.4 2.4 Q6.4 0.6 9.6 2.2 Q13 4.2 12.6 8 Q12 12.4 7.6 13.2 Q4 13.6 1.8 10.6" fill="none" stroke="#9a9a9a" stroke-width="1.3"/><path d="M0.6 0.6 L4.8 1.2 L2.2 4.8 Z" fill="#9a9a9a"/><path d="M5.6 5 V10.2 L9.8 7.6 Z" fill="none" stroke="#9a9a9a" stroke-width="0.9"/></svg><svg class="a" style="left:533px;top:271.5px" width="8" height="5"><path d="M0 0 H8 L4 4.6 Z" fill="#4a4a4a"/></svg><svg class="a" style="left:550.5px;top:266.5px" width="14" height="14"><path d="M1 4.4 L4.4 1 H12.6 V9.6 L9.2 13 H1 Z M1 4.4 H9.2 V13 M9.2 4.4 L12.6 1" fill="#f4f4f4" stroke="#a6a6a6" stroke-width="1"/></svg><svg class="a" style="left:567px;top:271.5px" width="8" height="5"><path d="M0 0 H8 L4 4.6 Z" fill="#4a4a4a"/></svg><svg class="a" style="left:584.5px;top:266.5px" width="14" height="14" viewBox="0 0 14 14"><rect x="3.4" y="3.4" width="7.2" height="7.2" fill="#b4b4b4"/><path d="M0.6 0.6 L3.4 3.4 M13.4 0.6 L10.6 3.4 M0.6 13.4 L3.4 10.6 M13.4 13.4 L10.6 10.6" stroke="#9a9a9a" stroke-width="1.3"/></svg><svg class="a" style="left:601px;top:271.5px" width="8" height="5"><path d="M0 0 H8 L4 4.6 Z" fill="#4a4a4a"/></svg><svg class="a" style="left:618.5px;top:266.5px" width="14" height="14"><path d="M1 3.6 L7 1 L13 3.6 V10.6 L7 13.4 L1 10.6 Z M1 3.6 L7 6.2 L13 3.6 M7 6.2 V13.4" fill="#fafafa" stroke="#a6a6a6" stroke-width="1"/></svg><svg class="a" style="left:635px;top:271.5px" width="8" height="5"><path d="M0 0 H8 L4 4.6 Z" fill="#4a4a4a"/></svg></div>
<svg class="a" id="view3d" style="left:394px;top:285px" width="800" height="486" viewBox="394 285 800 486">
<defs><linearGradient id="mh" gradientUnits="userSpaceOnUse" x1="546" x2="1030.5" y1="0" y2="0"><stop offset="0" stop-color="#fff" stop-opacity="0.27"/><stop offset="0.0970" stop-color="#fff" stop-opacity="1"/><stop offset="0.9030" stop-color="#fff" stop-opacity="1"/><stop offset="1" stop-color="#fff" stop-opacity="0.27"/></linearGradient><linearGradient id="mv" gradientUnits="userSpaceOnUse" x1="0" x2="0" y1="286.5" y2="774"><stop offset="0" stop-color="#fff" stop-opacity="0.27"/><stop offset="0.0964" stop-color="#fff" stop-opacity="1"/><stop offset="0.9036" stop-color="#fff" stop-opacity="1"/><stop offset="1" stop-color="#fff" stop-opacity="0.27"/></linearGradient><mask id="maskH" maskUnits="userSpaceOnUse" x="546" y="286.5" width="484.5" height="487.5"><rect x="546" y="286.5" width="484.5" height="487.5" fill="url(#mh)"/></mask><mask id="maskV" maskUnits="userSpaceOnUse" x="546" y="286.5" width="484.5" height="487.5"><rect x="546" y="286.5" width="484.5" height="487.5" fill="url(#mv)"/></mask></defs>
<g transform="matrix(1,0,0.01844,1,-5.311,0)"><g mask="url(#maskH)"><g mask="url(#maskV)"><rect x="546" y="286.5" width="484.5" height="487.5" fill="#8381cb"/></g></g></g>
<path d="M591.6,452.2 L677,407 L829,429.8 L831,596 L746,641 L594.5,618.5 Z" fill="rgb(94,49,126)" opacity="0.4"/>
<path d="M591.6,452.2 L743.3,473.4 L746,641 L594.5,618.5 Z" fill="rgb(90,40,140)" opacity="0.04"/>
<path d="M636,597 L665,412 L707.6,411.6 L794,590 Z" fill="rgb(172,108,136)" opacity="0.84"/>
<path d="M591.6,452.2 L677,407" stroke="#5c1a78" stroke-width="3.8" stroke-dasharray="5.5 5.5" fill="none" opacity="1"/>
<path d="M677,407 L829,429.8" stroke="#5c1a78" stroke-width="4.2" stroke-dasharray="9 7" fill="none" opacity="1"/>
<path d="M829,429.8 L743.3,473.4" stroke="#5c1a78" stroke-width="3.6" stroke-dasharray="5.5 5.5" fill="none" opacity="1"/>
<path d="M743.3,473.4 L591.6,452.2" stroke="#5c1a78" stroke-width="4.4" stroke-dasharray="10 8" fill="none" opacity="1"/>
<path d="M591.6,452.2 L594.5,618.5" stroke="#5c1a78" stroke-width="4.4" stroke-dasharray="9 8" fill="none" opacity="1"/>
<path d="M743.3,473.4 L746,641" stroke="#5c1a78" stroke-width="4.4" stroke-dasharray="9 8" fill="none" opacity="0.85"/>
<path d="M829,429.8 L831,596" stroke="#5c1a78" stroke-width="4.4" stroke-dasharray="9 8" fill="none" opacity="1"/>
<path d="M594.5,618.5 L746,641" stroke="#5c1a78" stroke-width="4.6" stroke-dasharray="9 7" fill="none" opacity="1"/>
<path d="M746,641 L831,596" stroke="#5c1a78" stroke-width="3.8" stroke-dasharray="5.5 5.5" fill="none" opacity="1"/>
<path d="M594.5,618.5 L680.5,574" stroke="#5c1a78" stroke-width="3.6" stroke-dasharray="5.5 5.5" fill="none" opacity="1"/>
<path d="M548,554.6 L680.5,574" stroke="#e01c24" stroke-width="1.7"/>
<circle cx="566" cy="557.2" r="2.7" fill="#e01c24"/>
<circle cx="604" cy="562.8" r="2.7" fill="#e01c24"/>
<circle cx="642" cy="568.4" r="2.7" fill="#e01c24"/>
<path d="M794,590 L1022,624.2" stroke="#861a56" stroke-width="2.3" stroke-dasharray="9 7.5" fill="none"/>
<ellipse cx="869" cy="601.4" rx="2.4" ry="3.2" fill="#861a56"/>
<ellipse cx="907.3" cy="607" rx="2.4" ry="3.2" fill="#861a56"/>
<ellipse cx="945.2" cy="612.8" rx="2.4" ry="3.2" fill="#861a56"/>
<ellipse cx="983.2" cy="618.4" rx="2.4" ry="3.2" fill="#861a56"/>
<path d="M1017,619.6 L1040.5,627 L1019,632.6 Q1014,626 1017,619.6 Z" fill="#c4102a"/>
<path d="M794,590 L933,527" stroke="#1f7a22" stroke-width="2.2"/>
<circle cx="815.4" cy="580.6" r="3.3" fill="#1f7a22"/>
<circle cx="836.4" cy="571" r="3.3" fill="#1f7a22"/>
<circle cx="857.7" cy="561.4" r="3.3" fill="#1f7a22"/>
<circle cx="879" cy="551.6" r="3.3" fill="#1f7a22"/>
<circle cx="900.3" cy="542" r="3.3" fill="#1f7a22"/>
<circle cx="921.6" cy="532.2" r="3.3" fill="#1f7a22"/>
<path d="M794,590 L672,646" stroke="#1c1c58" stroke-width="2.1" stroke-dasharray="7 6" fill="none"/>
<circle cx="771.5" cy="600.3" r="1.9" fill="#5a5aa0" stroke="#1c1c58" stroke-width="1.6"/>
<circle cx="751" cy="609.8" r="1.9" fill="#5a5aa0" stroke="#1c1c58" stroke-width="1.6"/>
<circle cx="730" cy="619.6" r="1.9" fill="#5a5aa0" stroke="#1c1c58" stroke-width="1.6"/>
<circle cx="708.5" cy="629.4" r="1.9" fill="#5a5aa0" stroke="#1c1c58" stroke-width="1.6"/>
<circle cx="687.5" cy="639.2" r="1.9" fill="#5a5aa0" stroke="#1c1c58" stroke-width="1.6"/>
<path d="M656,653.5 Q660,645.5 668.5,645.8 Q672,648 668,653 Z" fill="#141440"/>
<path d="M794,386 V590" stroke="#1818c8" stroke-width="2.2" stroke-dasharray="8.5 6" fill="none"/><path d="M794,590 V693" stroke="#1818d8" stroke-width="2.4"/>
<path d="M794,362.5 L799.2,385 Q794,387.6 788.8,385 Z" fill="#1414c8"/>
<path d="M790.6,422.7 H797.4" stroke="#1818c8" stroke-width="2.2"/>
<path d="M790.6,464.9 H797.4" stroke="#1818c8" stroke-width="2.2"/>
<path d="M790.6,506.8 H797.4" stroke="#1818c8" stroke-width="2.2"/>
<path d="M790.6,548.7 H797.4" stroke="#1818c8" stroke-width="2.2"/>
<path d="M790.6,632.8 H797.4" stroke="#1818c8" stroke-width="2.2"/>
<path d="M790.6,675 H797.4" stroke="#1818c8" stroke-width="2.2"/>
<path d="M636,597 L665,412" stroke="#2c5c96" stroke-width="3.6" stroke-linecap="round"/>
<path d="M707.6,411.6 L794,590" stroke="#2c5c96" stroke-width="3.6" stroke-linecap="round"/>
<path d="M636,597 L794,590" stroke="#2c5c96" stroke-width="3.6" stroke-linecap="round"/>
<path d="M665,412 L677,407 L707.6,411.6" stroke="#c62052" stroke-width="3.8" fill="none" stroke-linejoin="round"/>
<path d="M677.2,407 L679.6,574" stroke="#c62052" stroke-width="4"/>
<path d="M680.5,574 L636,597" stroke="#c62052" stroke-width="3.8"/><path d="M680.5,574 L794,590" stroke="#c62052" stroke-width="4"/>
<circle cx="718" cy="579.4" r="2.6" fill="#e01c24"/>
<circle cx="756" cy="584.8" r="2.6" fill="#e01c24"/>
<circle cx="591.6" cy="452.2" r="5.2" fill="#1a1a44"/><circle cx="594.5" cy="618.5" r="5.2" fill="#1a1a44"/><circle cx="743.3" cy="473.4" r="4.6" fill="#231a50"/><circle cx="829" cy="429.8" r="5" fill="#25255a"/>
<circle cx="665" cy="412" r="4.6" fill="#3a3a3a"/><circle cx="677" cy="407" r="5" fill="#333"/><circle cx="707.6" cy="411.6" r="4.8" fill="#3a3a3a"/><circle cx="636" cy="597" r="5" fill="#3c3232"/><circle cx="794" cy="590" r="5" fill="#3c3232"/>
<circle cx="831" cy="596" r="6.6" fill="#4545cc"/><circle cx="746" cy="641" r="6.6" fill="#4545cc"/><circle cx="680.5" cy="574" r="6.2" fill="#666ad8"/>
<text x="680" y="403" font-family="Liberation Sans, sans-serif" font-size="9" fill="#454558" opacity="0.75">E</text><text x="667.5" y="404.5" font-family="Liberation Sans, sans-serif" font-size="9" fill="#454558" opacity="0.75">I</text><text x="711" y="405" font-family="Liberation Sans, sans-serif" font-size="9" fill="#454558" opacity="0.75">L</text><text x="832" y="424" font-family="Liberation Sans, sans-serif" font-size="9" fill="#454558" opacity="0.75">F</text><text x="595" y="446.5" font-family="Liberation Sans, sans-serif" font-size="9" fill="#454558" opacity="0.75">H</text><text x="747" y="468.5" font-family="Liberation Sans, sans-serif" font-size="9" fill="#454558" opacity="0.75">G</text><text x="598" y="611" font-family="Liberation Sans, sans-serif" font-size="9" fill="#454558" opacity="0.75">D</text><text x="683.5" y="566.5" font-family="Liberation Sans, sans-serif" font-size="9" fill="#e4e4ff" opacity="0.75">A</text><text x="641" y="590.5" font-family="Liberation Sans, sans-serif" font-size="9" fill="#a03040" opacity="0.75">K</text><text x="796.5" y="583" font-family="Liberation Sans, sans-serif" font-size="9" fill="#454558" opacity="0.75">J</text><text x="835" y="591" font-family="Liberation Sans, sans-serif" font-size="9" fill="#7a7ac8" opacity="0.75">B</text><text x="750" y="634" font-family="Liberation Sans, sans-serif" font-size="9" fill="#454558" opacity="0.75">C</text>
<text x="779" y="380.5" font-family="Liberation Sans, sans-serif" font-size="8" fill="#2020c4" opacity="0.75">5</text><text x="779" y="424.5" font-family="Liberation Sans, sans-serif" font-size="8" fill="#2020c4" opacity="0.75">4</text><text x="779" y="466.5" font-family="Liberation Sans, sans-serif" font-size="8" fill="#2020c4" opacity="0.75">3</text><text x="779" y="508.5" font-family="Liberation Sans, sans-serif" font-size="8" fill="#2020c4" opacity="0.75">2</text><text x="780" y="550.5" font-family="Liberation Sans, sans-serif" font-size="8" fill="#2020c4" opacity="0.75">1</text><text x="776.5" y="634.5" font-family="Liberation Sans, sans-serif" font-size="8" fill="#2020c4" opacity="0.75">-1</text><text x="775" y="677.5" font-family="Liberation Sans, sans-serif" font-size="8" fill="#2020c4" opacity="0.75">-2</text>
<text x="830.5" y="613" font-family="Liberation Sans, sans-serif" font-size="8" fill="#981848" opacity="0.75">1</text><text x="868.5" y="619" font-family="Liberation Sans, sans-serif" font-size="8" fill="#981848" opacity="0.75">2</text><text x="906.5" y="624.5" font-family="Liberation Sans, sans-serif" font-size="8" fill="#981848" opacity="0.75">3</text><text x="944.5" y="630" font-family="Liberation Sans, sans-serif" font-size="8" fill="#981848" opacity="0.75">4</text><text x="982.5" y="636" font-family="Liberation Sans, sans-serif" font-size="8" fill="#981848" opacity="0.75">5</text><text x="1020.5" y="641.5" font-family="Liberation Sans, sans-serif" font-size="8" fill="#981848" opacity="0.75">6</text>
<text x="564.5" y="575" font-family="Liberation Sans, sans-serif" font-size="8" fill="#e8303a" opacity="0.75">-6</text><text x="604" y="579.5" font-family="Liberation Sans, sans-serif" font-size="8" fill="#e8303a" opacity="0.75">-5</text><text x="641.5" y="585.5" font-family="Liberation Sans, sans-serif" font-size="8" fill="#e8303a" opacity="0.75">-4</text><text x="680" y="588.5" font-family="Liberation Sans, sans-serif" font-size="8" fill="#e8303a" opacity="0.75">-3</text><text x="718" y="592" font-family="Liberation Sans, sans-serif" font-size="8" fill="#e8303a" opacity="0.75">-2</text><text x="760" y="596.5" font-family="Liberation Sans, sans-serif" font-size="8" fill="#e8303a" opacity="0.75">-1</text>
<text x="859" y="575" font-family="Liberation Sans, sans-serif" font-size="8" fill="#3c803c" opacity="0.7">-3</text><text x="881" y="565.5" font-family="Liberation Sans, sans-serif" font-size="8" fill="#3c803c" opacity="0.8">-4</text><text x="902" y="556" font-family="Liberation Sans, sans-serif" font-size="8" fill="#3c803c" opacity="0.8">-5</text><text x="924" y="545.5" font-family="Liberation Sans, sans-serif" font-size="8" fill="#3c803c" opacity="0.8">-6</text>
<text x="773.5" y="614" font-family="Liberation Sans, sans-serif" font-size="8.5" fill="#2c2c66" opacity="0.8">1</text><text x="752" y="622.5" font-family="Liberation Sans, sans-serif" font-size="8.5" fill="#2c2c66" opacity="0.8">2</text><text x="731" y="634.5" font-family="Liberation Sans, sans-serif" font-size="8.5" fill="#2c2c66" opacity="0.8">3</text><text x="709.5" y="643.5" font-family="Liberation Sans, sans-serif" font-size="8.5" fill="#2c2c66" opacity="0.75">4</text><text x="688.5" y="653.5" font-family="Liberation Sans, sans-serif" font-size="8.5" fill="#2c2c66" opacity="0.75">5</text><text x="666.5" y="664" font-family="Liberation Sans, sans-serif" font-size="8.5" fill="#2c2c66" opacity="0.75">6</text>
</svg>
<div class="a" id="taskbar" style="left:5px;top:793px;width:1189px;height:36px;background:#000"></div>
<div class="a" style="left:815.5px;top:793px;width:41.5px;height:33.5px;background:#343434"></div>
<svg class="a" style="left:14.0px;top:799.0px" width="24" height="24" viewBox="0 0 24 24"><path d="M5 6.6 L11 5.7 V11.5 H5 Z M12 5.55 L19.2 4.5 V11.5 H12 Z M5 12.5 H11 V18.3 L5 17.4 Z M12 12.5 H19.2 V19.5 L12 18.45 Z" fill="#fff"/></svg>
<svg class="a" style="left:56.0px;top:799.0px" width="24" height="24" viewBox="0 0 24 24"><circle cx="12" cy="12" r="5.6" fill="none" stroke="#fff" stroke-width="1.9"/></svg>
<svg class="a" style="left:98.0px;top:799.0px" width="24" height="24" viewBox="0 0 24 24"><rect x="7" y="6.2" width="10" height="11.6" fill="none" stroke="#fff" stroke-width="1.5"/><path d="M4.4 8 V16 M19.6 8 V16" stroke="#fff" stroke-width="1.4"/></svg>
<svg class="a" style="left:142.0px;top:799.0px" width="24" height="24" viewBox="0 0 24 24"><path d="M3.2 13 Q3.6 4.4 12.4 4 Q20.6 4.4 20.8 13.6 H9.4 Q9.8 17.6 14.4 17.6 Q17.6 17.6 20 16.2 V20 Q17.4 21.4 13.6 21.4 Q5.6 21 5.2 13.4 Q5.6 9.4 9 8 Q5 8.6 3.2 13 Z M9.6 10.8 H15.6 Q15.4 7.6 12.6 7.6 Q10 7.8 9.6 10.8 Z" fill="#1e7fd8" fill-rule="evenodd"/></svg>
<svg class="a" style="left:184.0px;top:799.0px" width="24" height="24" viewBox="0 0 24 24"><path d="M3 5.4 H9.4 L10.8 7 H21 V19.4 H3 Z" fill="#f3c54a"/><path d="M3 9 H21 V19.4 H3 Z" fill="#fbe08a"/><path d="M6.6 13.2 H17.4 V19.4 H6.6 Z" fill="#4aa4de"/><path d="M9 16.4 H15 V19.4 H9 Z" fill="#d8ecf8"/></svg>
<svg class="a" style="left:227.0px;top:799.0px" width="24" height="24" viewBox="0 0 24 24"><path d="M8.4 8 V5.6 Q8.4 3.4 12 3.4 Q15.6 3.4 15.6 5.6 V8" fill="none" stroke="#f2f2f2" stroke-width="1.5"/><path d="M3.6 7.6 H20.4 V21.2 H3.6 Z" fill="#f4f4f4"/><rect x="8.6" y="11" width="3" height="3" fill="#e8452c"/><rect x="12.4" y="11" width="3" height="3" fill="#7db928"/><rect x="8.6" y="14.8" width="3" height="3" fill="#2a9be0"/><rect x="12.4" y="14.8" width="3" height="3" fill="#f7b920"/></svg>
<svg class="a" style="left:270.0px;top:799.0px" width="24" height="24" viewBox="0 0 24 24"><path d="M12 6 H21 V19 H12 Z" fill="#f4f6fa"/><path d="M13.6 8.4 H19.6 M13.6 10.6 H19.6 M13.6 12.8 H19.6 M13.6 15 H19.6 M13.6 17.2 H19.6" stroke="#2b579a" stroke-width="0.9"/><path d="M2.6 5 L13.4 3 V22 L2.6 20 Z" fill="#2b579a"/></svg><div class="t" style='top:807.16px;font-size:9.5px;color:#fff;left:273.20px;font-weight:700;'>W</div>
<svg class="a" style="left:312.0px;top:799.0px" width="24" height="24" viewBox="0 0 24 24"><path d="M12 6 H21 V19 H12 Z" fill="#f8f0ee"/><path d="M14 9 H19.6 V12.6 H14 Z" fill="none" stroke="#d24726" stroke-width="0.9"/><path d="M14 15 H19.6 M14 17 H19.6" stroke="#d24726" stroke-width="0.9"/><path d="M2.6 5 L13.4 3 V22 L2.6 20 Z" fill="#d24726"/></svg><div class="t" style='top:807.16px;font-size:9.5px;color:#fff;left:317.20px;font-weight:700;'>P</div>
<svg class="a" style="left:355.0px;top:799.0px" width="24" height="24" viewBox="0 0 24 24"><circle cx="12" cy="12.6" r="9" fill="#ff9a1e"/><path d="M4 8 Q5 4.4 7 4 Q7.2 6 8.4 6.6 Q11 3.4 15 4.6 Q20.6 7 20.8 13 Q20 20.6 12.4 21.6 Q5 21.6 3.2 14.6 Q3 10.6 4 8 Z" fill="#ff5a2a"/><path d="M7 6 Q5 10 7.6 14 Q12 18 16 15 Q13 16 11.4 14 Q14 14 14.4 11.6 Q12.4 10.4 11 11.6 Q9 10 10 7.4 Q8 7.4 7 6 Z" fill="#ffc53a"/><circle cx="12.2" cy="13" r="3.6" fill="#7a3fd0"/><path d="M8.6 12 Q12 9.6 15.6 12.4 Q14 9 11 9.6 Q9 10.4 8.6 12 Z" fill="#ff7a2a"/></svg>
<svg class="a" style="left:398.0px;top:799.0px" width="24" height="24" viewBox="0 0 24 24"><ellipse cx="12" cy="12" rx="8.6" ry="9.4" fill="#e0162a"/><ellipse cx="12" cy="12" rx="3.8" ry="6.6" fill="#000"/></svg>
<svg width="0" height="0" style="position:absolute"><defs><radialGradient id="gTb" cx="0.4" cy="0.3" r="0.75"><stop offset="0" stop-color="#b8d4ee"/><stop offset="1" stop-color="#4a7eb8"/></radialGradient></defs></svg>
<svg class="a" style="left:440.0px;top:799.0px" width="24" height="24" viewBox="0 0 24 24"><circle cx="12" cy="12" r="9.6" fill="url(#gTb)"/><path d="M6 15 Q9 6 11 11 Q12 16 8 16 M13 15 Q15 8 18 9 M12.6 16.4 Q15 12 17 16" fill="none" stroke="#e8f2fc" stroke-width="1.1"/></svg>
<svg class="a" style="left:483.0px;top:799.0px" width="24" height="24" viewBox="0 0 24 24"><circle cx="13.6" cy="12" r="9" fill="#ed6c47"/><path d="M13.6 3 A9 9 0 0 1 22.6 12 H13.6 Z" fill="#ff8f6b"/><path d="M13.6 12 H22.6 A9 9 0 0 1 13.6 21 Z" fill="#d35230"/><rect x="2" y="6.6" width="11" height="11" rx="1.2" fill="#c43e1c"/></svg><div class="t" style='top:807.36px;font-size:9.5px;color:#fff;left:491.60px;font-weight:700;'>P</div>
<svg class="a" style="left:525.0px;top:799.0px" width="24" height="24" viewBox="0 0 24 24"><path d="M7 3.4 H21 Q22 3.4 22 4.4 V8 H7 Z" fill="#41a5ee"/><path d="M7 8 H22 V12.4 H7 Z" fill="#2b7cd3"/><path d="M7 12.4 H22 V16.8 H7 Z" fill="#185abd"/><path d="M7 16.8 H22 V20 Q22 21 21 21 H7 Z" fill="#103f91"/><rect x="2" y="6.8" width="11" height="11" rx="1.2" fill="#185abd"/></svg><div class="t" style='top:807.79px;font-size:9px;color:#fff;left:532.60px;font-weight:700;'>W</div>
<svg class="a" style="left:568.0px;top:799.0px" width="24" height="24" viewBox="0 0 24 24"><path d="M12 6 H21.4 V19 H12 Z" fill="#eef6f0"/><path d="M14 8.2 H20 M14 10.4 H20 M14 12.6 H20 M14 14.8 H20 M14 17 H20 M16.8 7 V18" stroke="#217346" stroke-width="0.9"/><path d="M2.6 5 L13.4 3 V22 L2.6 20 Z" fill="#217346"/></svg><div class="t" style='top:807.16px;font-size:9.5px;color:#fff;left:573.60px;font-weight:700;'>X</div>
<svg class="a" style="left:611.0px;top:799.0px" width="24" height="24" viewBox="0 0 24 24"><circle cx="12" cy="12" r="9.6" fill="#fff"/><path d="M12 12 L3.7 7.2 A9.6 9.6 0 0 1 20.3 7.2 Z" fill="#e33b2e"/><path d="M12 12 L20.3 7.2 A9.6 9.6 0 0 1 12 21.6 Z" fill="#f7c325"/><path d="M12 12 L12 21.6 A9.6 9.6 0 0 1 3.7 7.2 Z" fill="#2da94f"/><circle cx="12" cy="12" r="4.5" fill="#fff"/><circle cx="12" cy="12" r="3.5" fill="#4a8af4"/></svg>
<svg class="a" style="left:653.0px;top:799.0px" width="24" height="24" viewBox="0 0 24 24"><path d="M3.4 13 Q3.8 5 12.4 4.6 Q20.4 5 20.6 13.8 H9.2 Q9.6 17.4 13.6 17.4 Q16.2 17.4 17.4 15.6 H20.4 Q18.6 20.8 13 20.8 Q4.4 20.6 3.4 13 Z M9.2 11 H15.6 Q15.4 8 12.4 8 Q9.6 8.2 9.2 11 Z" fill="#36b4f0" fill-rule="evenodd"/><path d="M2.6 19.6 Q0.4 15 8 8.6 Q16 2.4 21 4 Q22.6 5.4 20.6 9" fill="none" stroke="#f2c43a" stroke-width="1.5"/></svg>
<svg class="a" style="left:696.0px;top:799.0px" width="24" height="24" viewBox="0 0 24 24"><circle cx="12" cy="12" r="9.6" fill="url(#gTb)"/></svg><div class="t" style='top:805.65px;font-size:12px;color:#eef4fc;left:701.00px;'>Σ</div><svg class="a" style="left:712px;top:805px" width="8" height="12"><circle cx="4" cy="3" r="1.8" fill="none" stroke="#eef4fc" stroke-width="0.9"/><path d="M4 6.6 V11 M1.8 8.8 H6.2" stroke="#eef4fc" stroke-width="0.9"/></svg>
<svg class="a" style="left:738.0px;top:799.0px" width="24" height="24" viewBox="0 0 24 24"><path d="M4 3.4 H20 V8 H4 Z" fill="#f3e8a0"/><path d="M4 16 H20 V20.6 H4 Z" fill="#c6b8ec"/><path d="M12 5.4 L21 11 L12 16.6 L3 11 Z" fill="#f4a6b4"/><path d="M12 9 L21 14.6 L12 19.4 L3 14.6 Z" fill="#f8c4cc" opacity="0.9"/></svg>
<svg class="a" style="left:781.0px;top:799.0px" width="24" height="24" viewBox="0 0 24 24"><rect x="3.6" y="3.6" width="16.8" height="16.8" fill="#0c3a24" stroke="#2f9a62" stroke-width="1.3"/><path d="M8.4 8.4 L15.6 15.6 M15.6 8.4 L8.4 15.6" stroke="#3fc07c" stroke-width="1.8"/><path d="M12 7 V17 M7 12 H17" stroke="#3fc07c" stroke-width="0.8"/></svg>
<svg class="a" style="left:824.0px;top:799.0px" width="24" height="24" viewBox="0 0 24 24"><rect x="1.6" y="1.6" width="20.8" height="20.8" rx="1.5" fill="#fbfbfb"/><path d="M9.4 5.6 L16.4 6.6 L19 13 L13.4 18.2 L6 15.4 L5 9 Z" fill="none" stroke="#555" stroke-width="1.6"/><g fill="#9a9ae8" stroke="#333" stroke-width="0.9"><circle cx="9.4" cy="5.8" r="1.7"/><circle cx="16.6" cy="6.8" r="1.7"/><circle cx="18.8" cy="13.2" r="1.7"/><circle cx="13.2" cy="18" r="1.7"/><circle cx="5.6" cy="14.8" r="1.7"/></g></svg>
<svg class="a" style="left:866.0px;top:799.0px" width="26" height="24" viewBox="0 0 26 24"><rect x="6" y="3.4" width="17" height="11.6" fill="#3aa0ea"/><path d="M6 3.4 H23 V6 H6 Z" fill="#6cc0f6"/><circle cx="7.4" cy="14.4" r="4.2" fill="#8fc8f0" fill-opacity="0.55" stroke="#c8d4de" stroke-width="1.3"/><path d="M10.4 17.6 L14 21.6" stroke="#b8b8b8" stroke-width="2"/></svg>
<svg class="a" style="left:990px;top:802px" width="18" height="18" viewBox="0 0 18 18"><circle cx="6.6" cy="8" r="2.6" fill="none" stroke="#fff" stroke-width="1.2"/><path d="M2 16 Q2.4 11.4 6.6 11.4 Q9 11.6 10 13" fill="none" stroke="#fff" stroke-width="1.2"/><circle cx="12.6" cy="4.6" r="2" fill="none" stroke="#fff" stroke-width="1.1"/><path d="M10.4 9.4 Q12.6 8 15.4 9.6" fill="none" stroke="#fff" stroke-width="1.1"/></svg>
<svg class="a" style="left:1022px;top:806px" width="14" height="9"><path d="M1.4 7.6 L7 2 L12.6 7.6" fill="none" stroke="#fff" stroke-width="1.3"/></svg>
<svg class="a" style="left:1042px;top:802px" width="18" height="19" viewBox="0 0 18 19"><g fill="#f4f4f4"><path d="M5.6 1.4 L9.2 3.6 L5.6 5.8 L2 3.6 Z M12.6 1.4 L16.2 3.6 L12.6 5.8 L9.2 3.6 Z M12.6 6.4 L16.2 8.6 L12.6 10.8 L9.2 8.6 Z M9.2 9.8 L12.4 11.8 L9.2 13.8 L6 11.8 Z M12.8 12.4 L15 11 L12.8 14.6 Z"/></g><rect x="1" y="8.6" width="8.4" height="8.6" rx="1" fill="#d4182c"/></svg>
<div class="t" style='top:809.86px;font-size:7.5px;color:#fff;left:1043.60px;font-weight:700;'>1</div>
<div class="t" style='top:805.20px;font-size:10.4px;color:#f2f2f2;left:1066.50px;letter-spacing:-0.677px;'>ENG</div>
<div class="t" style='top:797.23px;font-size:10.6px;color:#f2f2f2;left:1101.60px;letter-spacing:-0.35px;'>8:48 PM</div>
<div class="t" style='top:813.03px;font-size:10.6px;color:#f2f2f2;left:1100.50px;letter-spacing:-0.156px;'>3/3/2022</div>
<svg class="a" style="left:1157px;top:803px" width="24" height="24" viewBox="0 0 24 24"><path d="M1.4 1.4 H15 V11.8 H8.6 L6 14.6 V11.8 H1.4 Z" fill="#fff"/><path d="M3.6 4.2 H12.8 M3.6 6.6 H12.8 M3.6 9 H12.8" stroke="#222" stroke-width="1"/><circle cx="14.6" cy="14" r="6.3" fill="#2c2c2c" stroke="#6a6a6a" stroke-width="1.1"/></svg>
<div class="t" style='top:813.16px;font-size:8.8px;color:#fff;left:1169.20px;'>3</div>
<div class="a" style="left:1189.5px;top:794px;width:1px;height:32px;background:#5a5a5a"></div>
<div class="a" style="left:1167.5px;top:449.5px;width:27px;height:33px;background:#fff;border:1.5px solid #6e6e6e;border-right:none"></div>
<svg class="a" style="left:1174.5px;top:454.5px" width="17.5" height="23" viewBox="0 0 18 24"><path d="M1.6 1 H16.4 L9 8.4 Z M1.2 7.6 H16.8 L9 15.6 Z M0.6 14.4 H17.4 L9 23 Z" fill="#dc5530"/></svg>
<div class="a" id="magnifier" style="left:1040.5px;top:535.5px;width:153.5px;height:53px;background:#fff;box-shadow:0 0 5px rgba(0,0,0,0.35);border-top:1px solid #c8c8c8;border-left:1px solid #d0d0d0"><div class="a" style="left:0;top:26px;width:152.5px;height:27px;background:#f0f0f0"></div><div class="a" style="left:0;top:27px;width:26.5px;height:26px;background:#0c62c4"></div><div class="a" style="left:4px;top:37px;width:19px;height:6px;border:1.6px solid #fff"></div><div class="a" style="left:30.5px;top:38px;width:18px;height:3.4px;background:#0c5cb8"></div><div class="a" style="left:37.8px;top:30.6px;width:3.4px;height:18px;background:#0c5cb8"></div><svg class="a" style="left:6.5px;top:5.5px" width="16" height="14.5" viewBox="0 0 18 16"><rect x="3.4" y="1" width="13.6" height="8.8" fill="#3ca4ee"/><rect x="3.4" y="1" width="13.6" height="2" fill="#7ac4f6"/><circle cx="4.4" cy="9.6" r="3.2" fill="#a8d4f2" fill-opacity="0.6" stroke="#b4bcc4" stroke-width="1.1"/><path d="M6.6 12 L9.4 15" stroke="#9a9a9a" stroke-width="1.6"/></svg><div class="a" style="left:88px;top:12.6px;width:9.5px;height:1px;background:#9a9a9a"></div><svg class="a" style="left:131.5px;top:36.5px" width="8" height="5"><path d="M0 0 H8 L4 4.6 Z" fill="#333"/></svg></div>
<div class="t" style='top:544.20px;font-size:10.4px;color:#9c9c9c;left:1067.50px;letter-spacing:0.139px;'>Magnifier</div>
<div class="t" style='top:570.71px;font-size:9.8px;color:#1e1e1e;left:1104.00px;letter-spacing:-0.141px;'>100%</div>
<div class="t" style='top:570.71px;font-size:9.8px;color:#1e1e1e;left:1143.00px;letter-spacing:-0.094px;'>Views</div>
<div class="a" id="tooltip" style="left:884.8px;top:243.8px;width:101.2px;height:37.7px;background:#ffffe1;border:1px solid #1a1a1a"></div>
<div class="t" style='top:253.86px;font-size:6.79px;color:#111;right:623.50px;font-weight:700;direction:rtl;'>صفحه گذرنده از سه نقطه</div>
<div class="t" style='top:266.24px;font-size:7.99px;color:#222;right:628.50px;'>سه نقطه را انتخاب کنید.</div>
<svg class="a" style="left:916.5px;top:235.5px" width="14" height="20" viewBox="0 0 14 20"><path d="M1 1 V15.4 L4.4 12.2 L6.8 17.8 L9.2 16.8 L6.8 11.4 L11.4 11.2 Z" fill="#fff" stroke="#222" stroke-width="1.1" stroke-linejoin="round"/></svg>
</body></html>
